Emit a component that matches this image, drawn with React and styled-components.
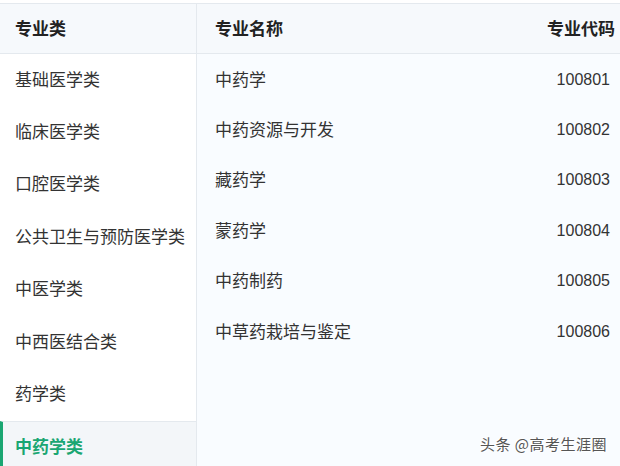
import React from 'react';
import styled, { createGlobalStyle } from 'styled-components';

const GlobalStyle = createGlobalStyle`
  html, body {
    margin: 0;
    padding: 0;
    background: #ffffff;
  }
  body {
    font-family: "Microsoft YaHei", "Noto Sans CJK SC", "Liberation Sans", sans-serif;
  }
`;

const Page = styled.div`
  width: 620px;
  height: 466px;
  padding-top: 3px;
  box-sizing: border-box;
  overflow: hidden;
  position: relative;
`;

const Board = styled.div`
  display: grid;
  grid-template-columns: 197px 1fr;
  height: 463px;
  border-top: 1px solid #e4e9ee;
  box-sizing: border-box;
`;

const SideColumn = styled.div`
  display: flex;
  flex-direction: column;
  border-right: 1px solid #e4e9ee;
  background: #ffffff;
`;

const MainColumn = styled.div`
  display: flex;
  flex-direction: column;
  background: #f9fcff;
`;

const HeadRow = styled.div`
  display: flex;
  align-items: center;
  justify-content: space-between;
  height: 50px;
  flex-shrink: 0;
  box-sizing: border-box;
  padding: 0 ${props => props.$right || 15}px 2px ${props => props.$left || 15}px;
  background: #f6f9fc;
  border-bottom: 1px solid #e4e9ee;
  font-size: 17px;
  font-weight: bold;
  color: #222;
`;

const SideItem = styled.div`
  display: flex;
  align-items: center;
  height: 52.4px;
  flex-shrink: 0;
  box-sizing: border-box;
  padding-left: ${props => (props.$active ? 12 : 15)}px;
  padding-bottom: 4px;
  font-size: 17px;
  color: ${props => (props.$active ? '#1aa672' : '#333')};
  font-weight: ${props => (props.$active ? 'bold' : 'normal')};
  background: ${props => (props.$active ? '#f3f6f9' : 'transparent')};
  border-left: ${props => (props.$active ? '3px solid #1aa672' : 'none')};
  border-top: ${props => (props.$active ? '1px solid #e4e9ee' : 'none')};
`;

const MajorRow = styled.div`
  display: flex;
  align-items: center;
  justify-content: space-between;
  height: 50.4px;
  flex-shrink: 0;
  box-sizing: border-box;
  padding: 0 10px 2px 18px;
  font-size: 17px;
  color: #333;
`;

const Code = styled.span`
  margin-top: 3px;
  font-family: "Liberation Sans", Arial, sans-serif;
  font-size: 16px;
  color: #333;
`;

const Watermark = styled.div`
  position: absolute;
  right: 13px;
  bottom: 12px;
  font-size: 15px;
  color: #555;
  text-shadow: 1px 1px 0 #fff, -1px -1px 0 #fff;
  letter-spacing: 0.5px;
`;

const categories = [
  '基础医学类',
  '临床医学类',
  '口腔医学类',
  '公共卫生与预防医学类',
  '中医学类',
  '中西医结合类',
  '药学类',
  '中药学类',
];

const majors = [
  { name: '中药学', code: '100801' },
  { name: '中药资源与开发', code: '100802' },
  { name: '藏药学', code: '100803' },
  { name: '蒙药学', code: '100804' },
  { name: '中药制药', code: '100805' },
  { name: '中草药栽培与鉴定', code: '100806' },
];

export default function App() {
  return (
    <Page>
      <GlobalStyle />
      <Board>
        <SideColumn>
          <HeadRow>专业类</HeadRow>
          {categories.map(c => (
            <SideItem key={c} $active={c === '中药学类'}>{c}</SideItem>
          ))}
        </SideColumn>
        <MainColumn>
          <HeadRow $left={18} $right={5}>
            <span>专业名称</span>
            <span>专业代码</span>
          </HeadRow>
          {majors.map(m => (
            <MajorRow key={m.code}>
              <span>{m.name}</span>
              <Code>{m.code}</Code>
            </MajorRow>
          ))}
        </MainColumn>
      </Board>
      <Watermark>头条 @高考生涯圈</Watermark>
    </Page>
  );
}
